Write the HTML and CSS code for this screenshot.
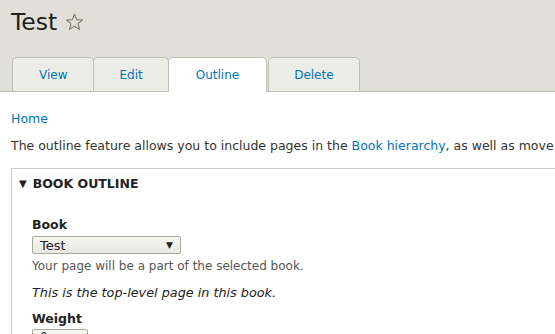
FILE: index.html
```html
<!DOCTYPE html>
<html>
<head>
<meta charset="utf-8">
<link rel="stylesheet" href="styles.css">
</head>
<body>
<header class="header">
  <h1 class="title">Test <span class="star"><svg width="19" height="18" viewBox="0 0 19 18"><path d="M9.5 1.2 L11.7 6.6 L17.5 7 L13 10.7 L14.5 16.4 L9.5 13.3 L4.5 16.4 L6 10.7 L1.5 7 L7.3 6.6 Z" fill="none" stroke="#7d7d72" stroke-width="1.1" stroke-linejoin="round"/></svg></span></h1>
  <ul class="tabs">
    <li class="tab"><a href="#">View</a></li>
    <li class="tab"><a href="#">Edit</a></li>
    <li class="tab active"><a href="#">Outline</a></li>
    <li class="tab"><a href="#">Delete</a></li>
  </ul>
</header>
<main class="content">
  <nav class="breadcrumb"><a href="#">Home</a></nav>
  <p class="intro">The outline feature allows you to include pages in the <a href="#">Book hierarchy</a>, as well as move them within the hierarchy or to reorder an entire book.</p>
  <fieldset class="outline">
    <div class="legend"><span class="tri">▼</span>BOOK OUTLINE</div>
    <div class="fields">
      <label class="label">Book</label>
      <div class="select"><span>Test</span><span class="arrow">▼</span></div>
      <div class="desc">Your page will be a part of the selected book.</div>
      <p class="note">This is the top-level page in this book.</p>
      <label class="label">Weight</label>
      <div class="weight">0</div>
    </div>
  </fieldset>
</main>
</body>
</html>
```
FILE: styles.css
```css
html, body { margin: 0; padding: 0; }
body {
  font-family: "DejaVu Sans", Verdana, sans-serif;
  font-size: 12px;
  color: #333;
  background: #fff;
  overflow: hidden;
}
a { color: #0074bd; text-decoration: none; }
.header {
  background: #e0e0d8;
  border-bottom: 1px solid #bebfb9;
  height: 92px;
  padding-left: 12px;
  box-sizing: border-box;
  display: flex;
  flex-direction: column;
}
.title {
  margin: 9px 0 0 -1px;
  font-size: 23.5px;
  font-weight: normal;
  color: #1f1f1f;
  line-height: 26px;
  display: flex;
  align-items: center;
}
.star { display: inline-flex; margin-left: 8px; margin-top: -1px; }
.tabs {
  list-style: none;
  margin: 22px 0 0 0;
  padding: 0;
  display: flex;
  align-items: flex-end;
}
.tab {
  height: 34px;
  box-sizing: border-box;
  background: #ededE7;
  border: 1px solid #bfbfba;
  border-bottom: none;
  border-radius: 5px 5px 0 0;
  display: flex;
  align-items: center;
  justify-content: center;
  padding: 1px 25px 0;
  margin-right: -1px;
  font-size: 12px;
}
.tab:first-child { padding: 1px 26px 0; }
.tab a { color: #0074bd; }
.tab.active {
  background: #fff;
  height: 35px;
  margin-bottom: -1px;
  position: relative;
  z-index: 1;
  padding: 0 27px 0;
  margin-right: 1px;
}
.content { padding: 0 11px; }
.breadcrumb { margin-top: 19px; font-size: 12.5px; line-height: 16px; }
.intro {
  margin: 11px 0 0 0;
  white-space: nowrap;
  font-size: 12.5px;
  line-height: 16px;
  color: #333;
}
.outline {
  margin: 14px -40px 0 0;
  padding: 0;
  border: 1px solid #ccc;
  min-width: 0;
}
.legend {
  padding: 7px 0 0 7px;
  font-weight: bold;
  font-size: 12.5px;
  line-height: 16px;
  color: #222;
}
.tri { font-size: 10px; margin-right: 6px; display: inline-block; transform: translateY(-1px); }
.fields { padding: 24px 20px 0 20px; }
.label {
  display: block;
  font-weight: bold;
  font-size: 12.5px;
  line-height: 16px;
  color: #222;
}
.select {
  margin-top: 3px;
  width: 149px;
  height: 18px;
  box-sizing: border-box;
  border: 1px solid #a8a8a0;
  border-radius: 2px;
  background: linear-gradient(#f6f6f3, #e8e8e3);
  display: flex;
  align-items: center;
  justify-content: space-between;
  padding: 0 7px 0 7px;
  font-size: 13px;
  color: #222;
}
.arrow { font-size: 9px; color: #222; }
.desc {
  margin-top: 4px;
  font-size: 12px;
  line-height: 16px;
  color: #555;
}
.note {
  margin: 11px 0 10px 0;
  font-style: italic;
  font-size: 12.8px;
  line-height: 16px;
  color: #222;
}
.weight {
  margin-top: 2px;
  width: 56px;
  height: 18px;
  box-sizing: border-box;
  border: 1px solid #a8a8a0;
  border-radius: 2px;
  background: linear-gradient(#f6f6f3, #e8e8e3);
  padding-left: 7px;
  font-size: 12px;
}
```
